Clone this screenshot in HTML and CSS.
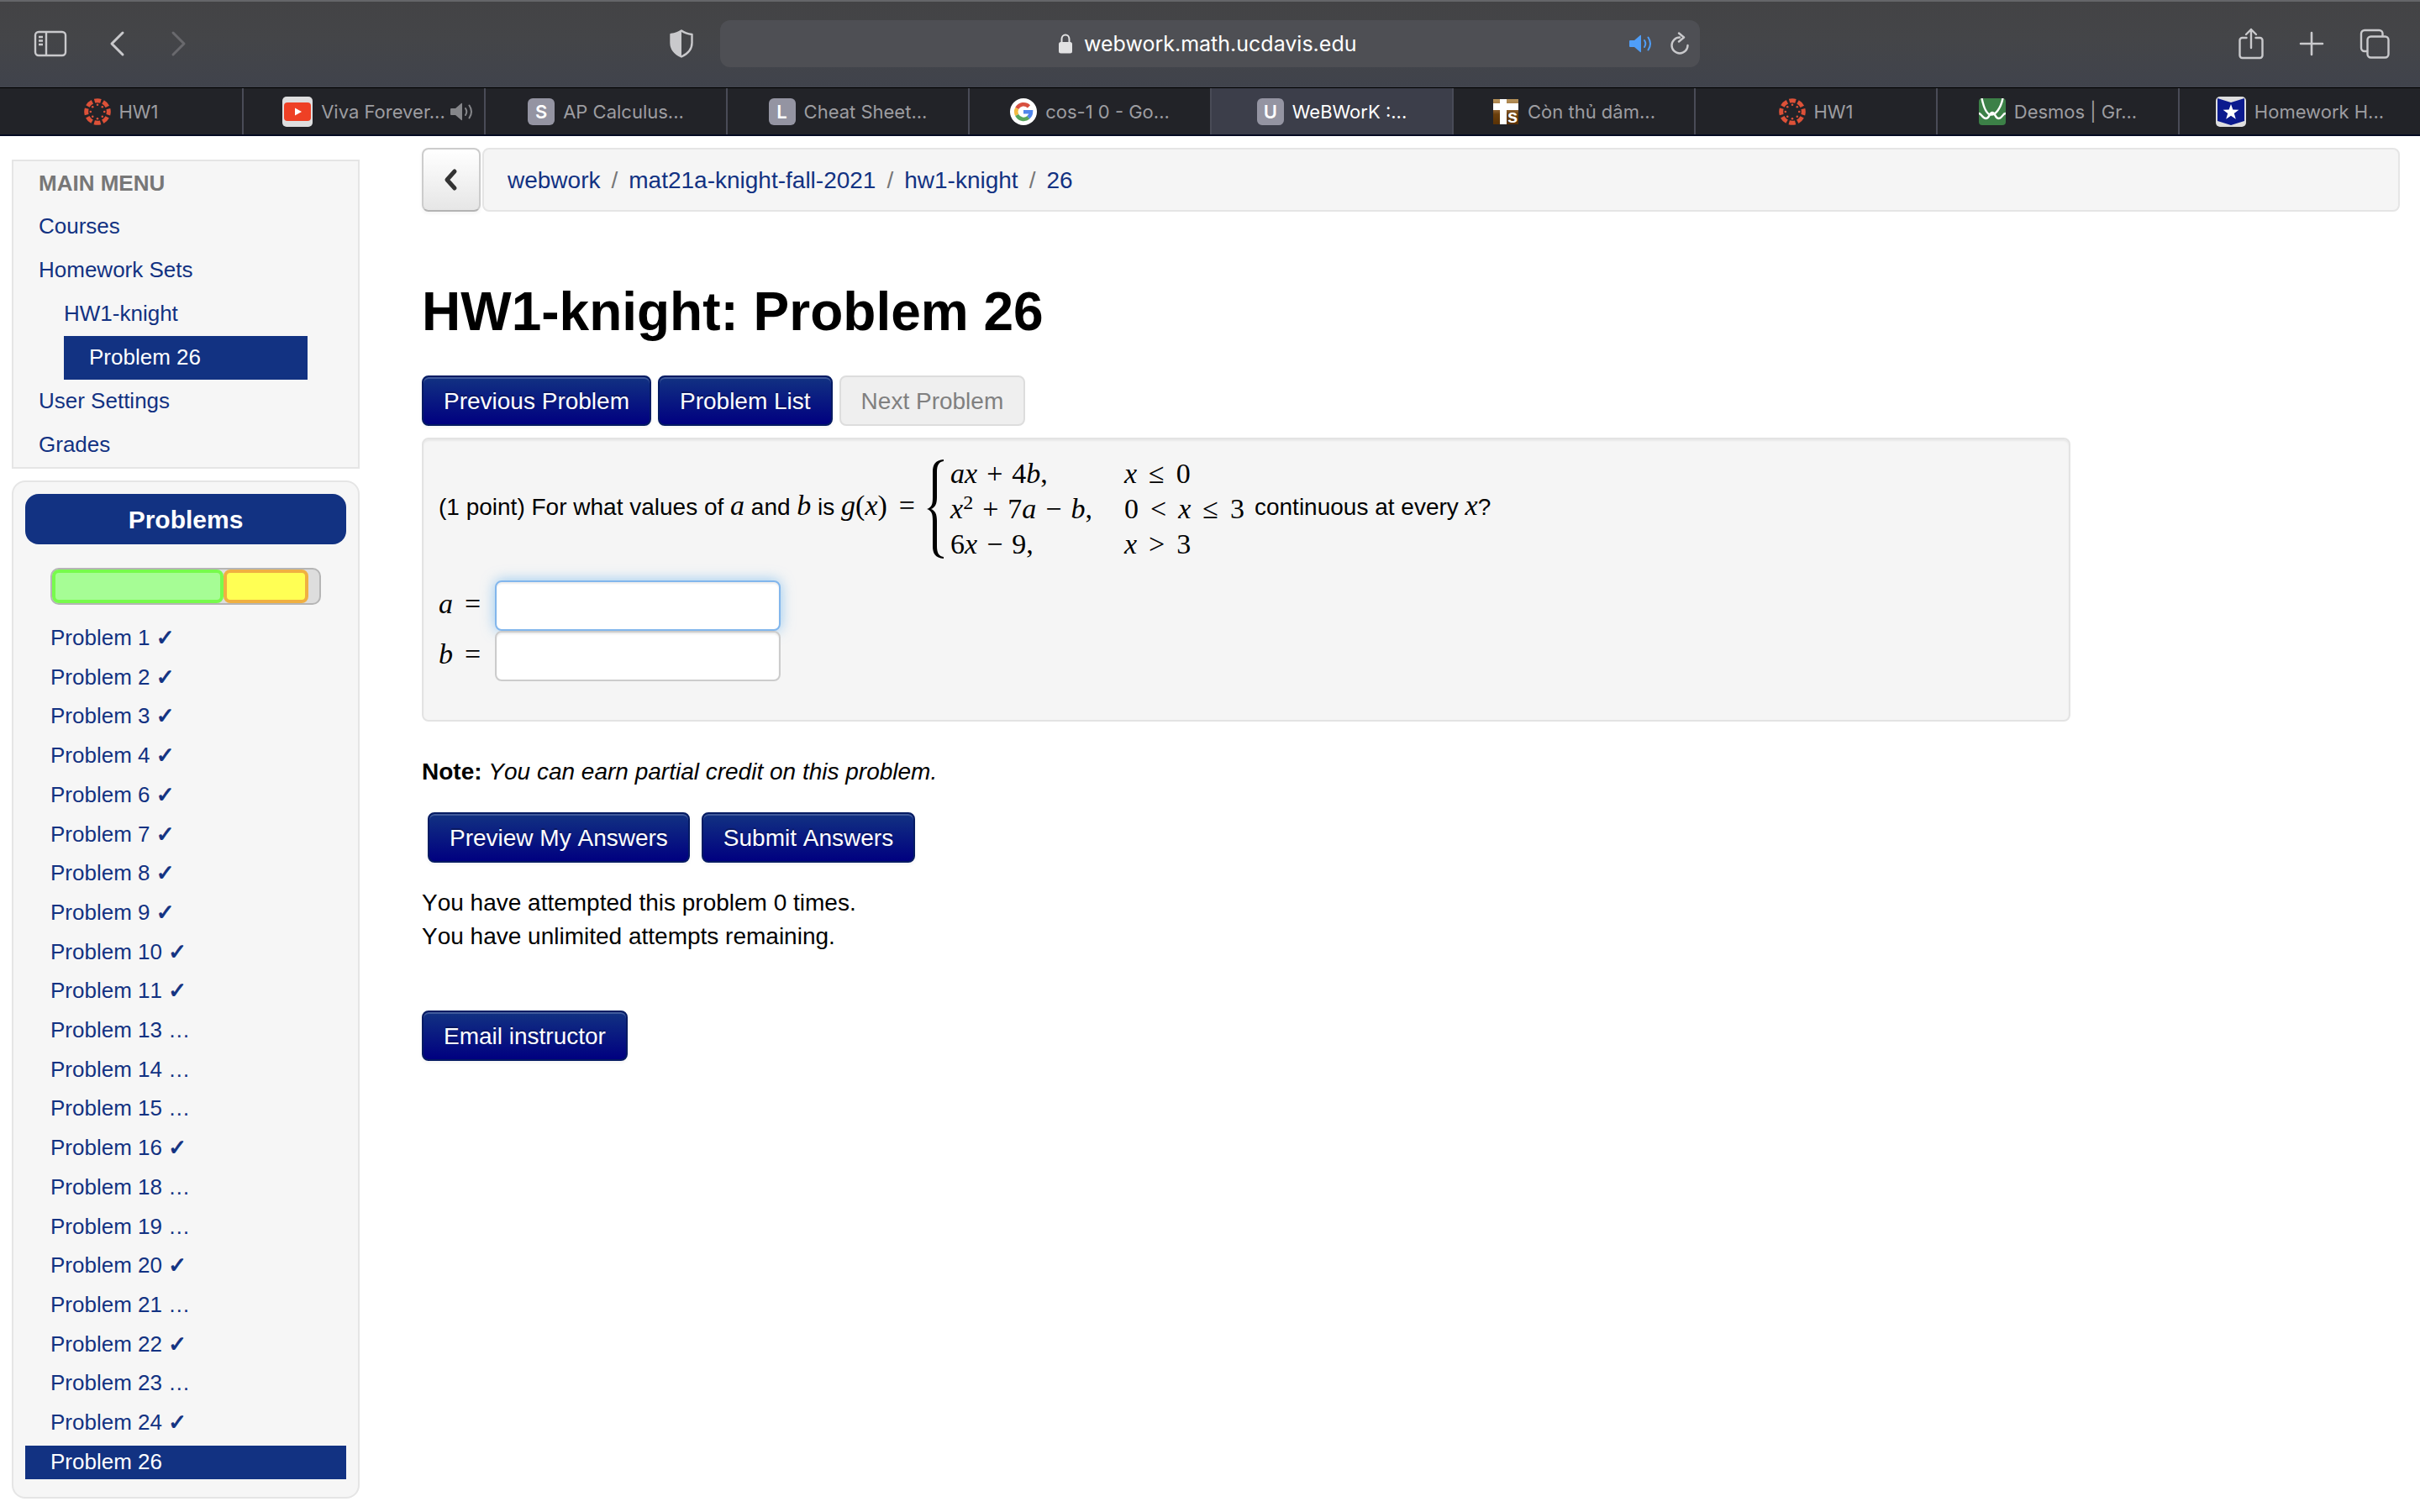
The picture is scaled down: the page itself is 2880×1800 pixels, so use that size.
FILE: index.html
```html
<!DOCTYPE html>
<html lang="en">
<head>
<meta charset="utf-8">
<title>WeBWorK : mat21a-knight-fall-2021 : HW1-knight : 26</title>
<link rel="stylesheet" href="styles.css">
</head>
<body>
<svg class="sprite" aria-hidden="true">
  <symbol id="canvas-logo" viewBox="0 0 32 32">
    <g fill="none" stroke="#dd5138" stroke-width="5" stroke-dasharray="7.6 2.82" stroke-dashoffset="3.8"><circle cx="16" cy="16" r="13.3"/></g>
    <g fill="#dd5138"><circle cx="16" cy="7.8" r="1.3"/><circle cx="16" cy="24.2" r="1.3"/><circle cx="7.8" cy="16" r="1.3"/><circle cx="24.2" cy="16" r="1.3"/><circle cx="10.2" cy="10.2" r="1.3"/><circle cx="21.8" cy="10.2" r="1.3"/><circle cx="10.2" cy="21.8" r="1.3"/><circle cx="21.8" cy="21.8" r="1.3"/></g>
  </symbol>
  <symbol id="speaker" viewBox="0 0 28 22">
    <path fill="currentColor" d="M1 7h5l7-6q1-.6 1 .6v18.800q0 1.200-1 .6l-7-6H1q-1 0-1-1V8q0-1 1-1z"/>
    <path fill="none" stroke="currentColor" stroke-width="2" stroke-linecap="round" d="M18 7q2.600 4 0 8M22.500 3.500q5 7.500 0 15"/>
  </symbol>
</svg>

<header class="browser">
  <div class="toolbar">
    <div class="tools">
      <button class="tool tool-sidebar" aria-label="Sidebar"><svg width="40" height="32" viewBox="0 0 40 32" fill="none" stroke="currentColor" stroke-width="2.400"><rect x="2" y="2" width="36" height="28" rx="4"/><path d="M15 2v28M6 8h5M6 12.500h5M6 17h5"/></svg></button>
      <button class="tool tool-back" aria-label="Back"><svg width="20" height="32" viewBox="0 0 20 32" fill="none" stroke="currentColor" stroke-width="3" stroke-linecap="round" stroke-linejoin="round"><path d="M16 3L3 16l13 13"/></svg></button>
      <button class="tool tool-forward" aria-label="Forward" disabled><svg width="20" height="32" viewBox="0 0 20 32" fill="none" stroke="currentColor" stroke-width="3" stroke-linecap="round" stroke-linejoin="round"><path d="M4 3l13 13L4 29"/></svg></button>
      <button class="tool tool-shield" aria-label="Privacy report"><svg width="28" height="34" viewBox="0 0 28 34"><path fill="none" stroke="currentColor" stroke-width="2.400" stroke-linejoin="round" d="M14 1.500C18 4.500 22 5.500 26.500 6V16c0 8-5 13-12.500 16.500C6.500 29 1.500 24 1.500 16V6C6 5.500 10 4.500 14 1.500z"/><path fill="currentColor" d="M14 1.500C10 4.500 6 5.500 1.500 6V16c0 8 5 13 12.500 16.500z"/></svg></button>
    </div>
    <div class="address">
      <svg width="16" height="24" viewBox="0 0 16 24"><rect x="0" y="10" width="16" height="13.500" rx="2.500" fill="#e2e2e3"/><path d="M3.500 11V6.500a4.500 5 0 0 1 9 0V11" fill="none" stroke="#e2e2e3" stroke-width="2"/></svg>
      <input class="address-input" type="text" value="webwork.math.ucdavis.edu" aria-label="Address">
      <div class="address-actions">
        <button class="tool tool-sound" aria-label="Mute"><svg width="28" height="22"><use href="#speaker"/></svg></button>
        <button class="tool" aria-label="Reload"><svg width="24" height="28" viewBox="0 0 24 28" fill="none" stroke="currentColor" stroke-width="2.400" stroke-linecap="round" stroke-linejoin="round"><path d="M12 6.500a9.500 9.500 0 1 0 9.500 9.500M11 1.500l6 5-6 5"/></svg></button>
      </div>
    </div>
    <div class="tools tools-end">
      <button class="tool" aria-label="Share"><svg width="30" height="38" viewBox="0 0 30 38" fill="none" stroke="currentColor" stroke-width="2.400" stroke-linecap="round" stroke-linejoin="round"><path d="M9.500 12H4.500a3 3 0 0 0-3 3v18a3 3 0 0 0 3 3h21a3 3 0 0 0 3-3V15a3 3 0 0 0-3-3h-5M15 24V2M9 8l6-6 6 6"/></svg></button>
      <button class="tool" aria-label="New tab"><svg width="30" height="30" viewBox="0 0 30 30" fill="none" stroke="currentColor" stroke-width="2.600" stroke-linecap="round"><path d="M15 2v26M2 15h26"/></svg></button>
      <button class="tool" aria-label="Tab overview"><svg width="36" height="36" viewBox="0 0 36 36" fill="none" stroke="currentColor" stroke-width="2.400"><rect x="9.500" y="9.500" width="25" height="25" rx="4"/><path d="M9.500 27H6a4 4 0 0 1-4-4V6a4 4 0 0 1 4-4h17.500a4 4 0 0 1 4 4v3.500"/></svg></button>
    </div>
  </div>
  <nav class="tabs" aria-label="Tabs">
    <a class="tab" href="#"><svg class="favicon"><use href="#canvas-logo"/></svg>HW1</a>
    <a class="tab" href="#"><svg class="favicon favicon-boxed" viewBox="0 0 36 36"><rect width="36" height="36" rx="5" fill="#dededf"/><rect x="2" y="7" width="32" height="22" rx="4" fill="#ee4025"/><path d="M15 13.500v9l8-4.500z" fill="#fff"/></svg>Viva Forever...<svg class="tab-sound" width="28" height="22"><use href="#speaker"/></svg></a>
    <a class="tab" href="#"><span class="favicon favicon-letter">S</span>AP Calculus...</a>
    <a class="tab" href="#"><span class="favicon favicon-letter">L</span>Cheat Sheet...</a>
    <a class="tab" href="#"><svg class="favicon" viewBox="0 0 32 32" fill="none" stroke-width="4.500"><circle cx="16" cy="16" r="16" fill="#fff"/><path stroke="#d8503f" d="M8.200 12A9 9 0 0 1 22.500 9.800"/><path stroke="#f3bb42" d="M8.200 20a9 9 0 0 1 0-8"/><path stroke="#58a55c" d="M22 22.800A9 9 0 0 1 8.200 20"/><path stroke="#5086ec" d="M16 16.200h9a9 9 0 0 1-3.200 6.600"/></svg>cos-1 0 - Go...</a>
    <a class="tab tab-active" href="#" aria-current="page"><span class="favicon favicon-letter">U</span>WeBWorK :...</a>
    <a class="tab" href="#"><svg class="favicon favicon-ts" viewBox="-1 -1 32 32"><defs><linearGradient id="wood" x2="0" y2="1"><stop stop-color="#b8935a"/><stop offset=".4" stop-color="#94693a"/><stop offset=".6" stop-color="#6b3f0c"/><stop offset="1" stop-color="#5a3206"/></linearGradient></defs><rect width="30" height="30" fill="url(#wood)"/><path d="M8 0h8v5h14v8H16v17H8V13H0V5h8z" fill="#fff"/><text x="17" y="28" class="ts-letter">s</text></svg>Còn thủ dâm...</a>
    <a class="tab" href="#"><svg class="favicon"><use href="#canvas-logo"/></svg>HW1</a>
    <a class="tab" href="#"><svg class="favicon" viewBox="0 0 32 32"><rect width="32" height="32" rx="4" fill="#3c8047"/><path d="M3.500 0C6 12 9 19 14 19.500 20 20 26 12 28.500 0M0 18c3 0 4 6 8.500 6 4 0 4-7 7.500-7s3.500 7 7.500 7c4.500 0 4.500-6 8.500-6" fill="none" stroke="#fff" stroke-width="2.400"/></svg>Desmos | Gr...</a>
    <a class="tab" href="#"><svg class="favicon favicon-boxed" viewBox="0 0 36 36"><rect width="36" height="36" rx="5" fill="#dededf"/><path d="M2 2l16 5 16-5v27l-16 5-16-5z" fill="#0b1a8e"/><path d="M18 9l2.400 6.600 7 .2-5.600 4.200 2 6.800-5.800-4-5.800 4 2-6.800-5.600-4.200 7-.2z" fill="#fff"/></svg>Homework H...</a>
  </nav>
</header>

<div class="page">
  <aside class="sidebar">
    <nav class="panel menu" aria-label="Main menu">
      <h2 class="menu-title">MAIN MENU</h2>
      <ul class="list">
        <li><a class="menu-link" href="#">Courses</a></li>
        <li><a class="menu-link" href="#">Homework Sets</a>
          <ul class="list menu-sub">
            <li><a class="menu-link" href="#">HW1-knight</a></li>
            <li><a class="menu-link menu-current" href="#">Problem 26</a></li>
          </ul>
        </li>
        <li><a class="menu-link" href="#">User Settings</a></li>
        <li><a class="menu-link" href="#">Grades</a></li>
      </ul>
    </nav>
    <section class="panel problems">
      <h2 class="problems-title">Problems</h2>
      <div class="progress">
        <div class="progress-done" style="width:64%"></div>
        <div class="progress-partial" style="width:32%"></div>
      </div>
      <ul class="list problem-list">
        <li><a href="#">Problem 1 <span class="tick">✓</span></a></li>
        <li><a href="#">Problem 2 <span class="tick">✓</span></a></li>
        <li><a href="#">Problem 3 <span class="tick">✓</span></a></li>
        <li><a href="#">Problem 4 <span class="tick">✓</span></a></li>
        <li><a href="#">Problem 6 <span class="tick">✓</span></a></li>
        <li><a href="#">Problem 7 <span class="tick">✓</span></a></li>
        <li><a href="#">Problem 8 <span class="tick">✓</span></a></li>
        <li><a href="#">Problem 9 <span class="tick">✓</span></a></li>
        <li><a href="#">Problem 10 <span class="tick">✓</span></a></li>
        <li><a href="#">Problem 11 <span class="tick">✓</span></a></li>
        <li><a href="#">Problem 13 …</a></li>
        <li><a href="#">Problem 14 …</a></li>
        <li><a href="#">Problem 15 …</a></li>
        <li><a href="#">Problem 16 <span class="tick">✓</span></a></li>
        <li><a href="#">Problem 18 …</a></li>
        <li><a href="#">Problem 19 …</a></li>
        <li><a href="#">Problem 20 <span class="tick">✓</span></a></li>
        <li><a href="#">Problem 21 …</a></li>
        <li><a href="#">Problem 22 <span class="tick">✓</span></a></li>
        <li><a href="#">Problem 23 …</a></li>
        <li><a href="#">Problem 24 <span class="tick">✓</span></a></li>
        <li><a class="problem-current" href="#">Problem 26</a></li>
      </ul>
    </section>
  </aside>

  <main class="main">
    <div class="crumb-row">
      <button class="crumb-back" aria-label="Up one level"><svg width="20" height="28" viewBox="0 0 20 28" fill="none" stroke="#333" stroke-width="5" stroke-linecap="round" stroke-linejoin="round"><path d="M14 4L5 14l9 10"/></svg></button>
      <nav class="crumbs" aria-label="Breadcrumb"><a href="#">webwork</a><span>/</span><a href="#">mat21a-knight-fall-2021</a><span>/</span><a href="#">hw1-knight</a><span>/</span><a href="#">26</a></nav>
    </div>
    <h1 class="title">HW1-knight: Problem 26</h1>
    <div class="buttons">
      <button class="btn">Previous Problem</button>
      <button class="btn">Problem List</button>
      <button class="btn" disabled>Next Problem</button>
    </div>
    <form class="problem">
      <p class="statement">(1 point) For what values of <i class="math">a</i> and <i class="math">b</i> is <span class="math"><i>g</i>(<i>x</i>)<span class="rel">=</span></span><svg class="brace" width="20" height="118" viewBox="0 0 20 118"><path d="M20 0C10 1 7 6 7 15v30c0 8-1 12-7 14 6 2 7 6 7 14v30c0 9 3 14 13 15v-2c-6-1-8-5-8-13V73c0-8-2-12-7-14 5-2 7-6 7-14V15c0-8 2-12 8-13z"/></svg><span class="math cases"><span><i>ax</i><span class="bin">+</span>4<i>b</i>,</span><span><i>x</i><span class="rel">≤</span>0</span><span><i>x</i><sup>2</sup><span class="bin">+</span>7<i>a</i><span class="bin">−</span><i>b</i>,</span><span>0<span class="rel">&lt;</span><i>x</i><span class="rel">≤</span>3</span><span>6<i>x</i><span class="bin">−</span>9,</span><span><i>x</i><span class="rel">&gt;</span>3</span></span>continuous at every <i class="math">x</i>?</p>
      <div class="answer"><label class="math" for="ans-a"><i>a</i><span class="rel">=</span></label><input class="field field-focus" id="ans-a" type="text"></div>
      <div class="answer"><label class="math" for="ans-b"><i>b</i><span class="rel">=</span></label><input class="field" id="ans-b" type="text"></div>
    </form>
    <p class="note"><b>Note:</b> <i>You can earn partial credit on this problem.</i></p>
    <div class="buttons submit-row">
      <button class="btn">Preview My Answers</button>
      <button class="btn">Submit Answers</button>
    </div>
    <p class="attempts">You have attempted this problem 0 times.<br>You have unlimited attempts remaining.</p>
    <button class="btn">Email instructor</button>
  </main>
</div>
</body>
</html>
```

FILE: styles.css
```css
* { box-sizing: border-box; }

body {
  margin: 0;
  min-height: 100vh;
  display: flex;
  flex-direction: column;
  background: #fff;
  color: #000;
  font: 28px/40px "Liberation Sans", Arial, sans-serif;
  font-kerning: none;
}

button, input { font: inherit; font-kerning: inherit; }
h1, h2, p { margin: 0; }
a { color: #123282; text-decoration: none; }
.sprite { display: none; }
.list { list-style: none; margin: 0; padding: 0; }

/* Browser chrome */
.browser {
  border-bottom: 2px solid #040a22;
  font-family: Inter, sans-serif;
  font-kerning: normal;
}

.toolbar {
  height: 104px;
  display: grid;
  grid-template-columns: 1fr 1166px 1fr;
  column-gap: 32px;
  align-items: center;
  padding: 0 36px;
  background: linear-gradient(#434345, #444548 45%, #40434c);
  box-shadow: inset 0 2px 0 #656669;
}

.tools { display: flex; align-items: center; }
.tools-end { justify-content: flex-end; gap: 42px; }

.tool {
  display: flex;
  padding: 0;
  border: 0;
  background: none;
  color: #c9c9cc;
}
.tool-sidebar { margin-left: 4px; }
.tool-back { margin-left: 50px; }
.tool-forward { margin-left: 52px; color: #69696d; }
.tool-shield { margin-left: auto; }
.tool-sound { color: #4f9ef8; }

.address {
  position: relative;
  height: 56px;
  display: flex;
  align-items: center;
  justify-content: center;
  gap: 14px;
  border-radius: 12px;
  background: #4e4f54;
}
.address-input {
  width: 330px;
  padding: 0;
  border: 0;
  background: none;
  color: #fff;
  font-size: 25px;
}
.address-actions {
  position: absolute;
  right: 12px;
  display: flex;
  align-items: center;
  gap: 20px;
}

.tabs {
  display: grid;
  grid-template-columns: repeat(10, 1fr);
  height: 56px;
  border-top: 1px solid #000;
  background: #222328;
}
.tab {
  position: relative;
  display: flex;
  align-items: center;
  justify-content: center;
  gap: 10px;
  border-left: 2px solid #494b57;
  color: #9d9da1;
  font-size: 22px;
  white-space: nowrap;
}
.tab:first-child { border-left: 0; }
.tab-active { background: #3c3e4a; color: #fff; }
.tab-sound { position: absolute; right: 12px; color: #85868a; }

.favicon { width: 32px; height: 32px; flex: none; }
.favicon-boxed { width: 36px; height: 36px; }
.favicon-letter {
  border-radius: 6px;
  background: #9494a2;
  color: #fff;
  font-size: 22px;
  font-weight: 600;
  line-height: 32px;
  text-align: center;
}
.favicon-ts { overflow: visible; }
.ts-letter { fill: #fff; font: bold 22px "Liberation Sans", sans-serif; }

/* Page */
.page { flex: 1; display: flex; padding: 14px 24px 16px 14px; }

.sidebar {
  width: 414px;
  flex: none;
  display: flex;
  flex-direction: column;
  gap: 14px;
  margin: 14px 74px 0 0;
  font-size: 26px;
}
.panel { border: 2px solid #e5e5e5; background: #f6f6f6; }

.menu { padding: 0 60px 0 30px; }
.menu-title {
  color: #777;
  font-size: 26px;
  line-height: 52px;
}
.menu-link { display: block; padding-bottom: 2px; line-height: 50px; }
.menu-sub { padding-left: 30px; }
.menu-current { padding-left: 30px; background: #123282; color: #fff; }

.problems {
  flex: 1;
  display: flex;
  flex-direction: column;
  padding: 14px 14px 21px;
  border-radius: 16px;
}
.problems-title {
  padding-top: 2px;
  border-radius: 16px;
  background: #123282;
  color: #fff;
  font-size: 30px;
  line-height: 58px;
  text-align: center;
}
.progress {
  display: flex;
  height: 44px;
  margin: 28px 30px 20px;
  border: 2px solid #b5b5b5;
  border-radius: 10px;
  background: #ddd;
}
.progress-done, .progress-partial { border: 4px solid; border-radius: 8px; }
.progress-done { border-color: #77fb4c; background: #a6fd95; }
.progress-partial { border-color: #f0b041; background: #ffff54; }

.problem-list { flex: 1; display: flex; flex-direction: column; justify-content: space-between; }
.problem-list a { display: block; padding: 0 0 2px 30px; line-height: 38px; }
.problem-list .problem-current { background: #123282; color: #fff; }
.tick { font-family: "DejaVu Sans", sans-serif; line-height: 1; -webkit-text-stroke: 1px currentColor; }

.main { flex: 1; min-width: 0; }

.crumb-row { display: flex; gap: 2px; height: 76px; }
.crumb-back {
  width: 70px;
  display: flex;
  align-items: center;
  justify-content: center;
  padding: 0;
  border: 2px solid #ccc;
  border-bottom-color: #b3b3b3;
  border-radius: 8px;
  background: linear-gradient(#fff, #e6e6e6);
  box-shadow: 0 2px 4px rgba(0, 0, 0, .05);
}
.crumbs {
  flex: 1;
  padding: 0 28px;
  border: 2px solid #e5e5e5;
  border-radius: 8px;
  background: #f5f5f5;
  line-height: 74px;
}
.crumbs span { margin: 0 13px; color: #777; }

.title { margin: 79px 0 36px; font-size: 64px; line-height: 80px; }

.buttons { display: flex; gap: 8px; }
.btn {
  height: 60px;
  padding: 2px 24px 0;
  border: 2px solid #051b63;
  border-radius: 8px;
  background: linear-gradient(#123282, #000080);
  box-shadow: inset 0 2px 0 rgba(255, 255, 255, .2), 0 2px 4px rgba(0, 0, 0, .05);
  color: #fff;
  text-shadow: 0 -2px 0 rgba(0, 0, 0, .25);
}
.btn:disabled {
  border-color: #ddd;
  background: #efefef;
  box-shadow: none;
  color: #808080;
  text-shadow: none;
}

.problem {
  width: calc(100% * 5 / 6);
  margin: 14px 0 40px;
  padding: 20px 18px 46px;
  border: 2px solid #e3e3e3;
  border-radius: 8px;
  background: #f5f5f5;
  box-shadow: inset 0 2px 2px rgba(0, 0, 0, .05);
}
.statement { margin-bottom: 22px; }
.math { font-family: "Liberation Serif", "Times New Roman", serif; font-size: 34px; }
.math sup { font-size: 24px; line-height: 1; vertical-align: 11px; }
.rel { margin: 0 14px; }
.bin { margin: 0 11px; }
.brace { vertical-align: middle; }
.cases {
  display: inline-grid;
  grid-template-columns: auto auto;
  column-gap: 38px;
  line-height: 42px;
  vertical-align: middle;
  margin: 0 12px 0 8px;
}

.answer { display: flex; align-items: center; }
.answer label { padding-bottom: 4px; }
.answer .rel { margin-right: 17px; }
.field {
  width: 340px;
  height: 60px;
  padding: 8px 12px;
  border: 2px solid #ccc;
  border-radius: 8px;
  background: #fff;
  box-shadow: inset 0 2px 2px rgba(0, 0, 0, .075);
}
.field-focus {
  border-color: #82b6ec;
  box-shadow: inset 0 2px 2px rgba(0, 0, 0, .075), 0 0 16px rgba(82, 168, 236, .6);
}

.submit-row { gap: 14px; margin: 28px 0 28px 7px; }
.attempts { margin-bottom: 68px; }
```
